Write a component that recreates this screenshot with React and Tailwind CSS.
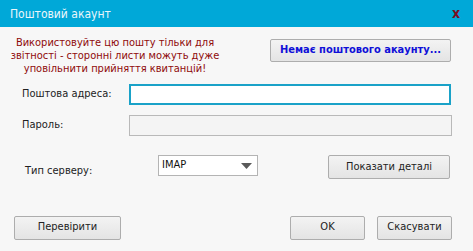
import React from "react";

const font = { fontFamily: '"DejaVu Sans Condensed", "Liberation Sans", Arial, sans-serif' };

function Btn({ className = "", children }) {
  return (
    <div
      className={
        "shrink-0 flex items-center justify-center border border-[#adadad] rounded-[2px] bg-gradient-to-b from-[#f3f3f3] to-[#e4e4e4] text-[11px] text-[#222] whitespace-nowrap " +
        className
      }
    >
      {children}
    </div>
  );
}

export default function App() {
  return (
    <div
      className="w-[473px] h-[251px] bg-[#f7f7f7] flex flex-col overflow-hidden"
      style={font}
    >
      <div className="h-[27px] bg-[#00a8d8] flex items-center justify-between pl-[10px] pr-[13px] shrink-0">
        <span className="text-[12px] text-[#eaf6fb]">Поштовий акаунт</span>
        <span className="text-[14px] font-bold text-[#7a0c1e] leading-none pb-[1px]">x</span>
      </div>

      <div className="flex items-start">
        <div className="shrink-0 w-[220px] ml-[5px] pt-[9px] text-center text-[11px] leading-[13px] text-[#8f0a0a]">
          Використовуйте цю пошту тільки для звітності - сторонні листи можуть дуже уповільнити прийняття квитанцій!
        </div>
        <Btn className="ml-[45px] mt-[12px] w-[181px] h-[23px] font-bold">
          <span className="text-[#1010d8] text-[11px]">Немає поштового акаунту...</span>
        </Btn>
      </div>

      <div className="flex items-center mt-[9px]">
        <span className="shrink-0 w-[129px] pl-[22px] text-[11px] text-[#222] whitespace-nowrap">Поштова адреса:</span>
        <div className="shrink-0 w-[322px] h-[21px] border-2 border-[#1aa2c8] bg-white" />
      </div>

      <div className="flex items-center mt-[10px]">
        <span className="shrink-0 w-[129px] pl-[22px] text-[11px] text-[#222] whitespace-nowrap">Пароль:</span>
        <div className="shrink-0 w-[323px] h-[21px] border border-[#b9b9b9] bg-[#f4f4f4]" />
      </div>

      <div className="flex items-start mt-[19px]">
        <span className="shrink-0 w-[158px] pl-[25px] pt-[8px] text-[11px] text-[#222] whitespace-nowrap">Тип серверу:</span>
        <div className="shrink-0 w-[100px] h-[21px] border border-[#b4b4b4] bg-white flex items-center justify-between pl-[3px] pr-[5px]">
          <span className="text-[11px] text-[#111]">IMAP</span>
          <svg width="11" height="6" viewBox="0 0 11 6">
            <path d="M0 0 L11 0 L5.5 6 Z" fill="#5a5a5a" />
          </svg>
        </div>
        <Btn className="ml-[70px] w-[122px] h-[24px]">Показати деталі</Btn>
      </div>

      <div className="flex items-start mt-[36px]">
        <Btn className="ml-[14px] w-[107px] h-[24px]">Перевірити</Btn>
        <Btn className="ml-[169px] w-[75px] h-[24px]">OK</Btn>
        <Btn className="ml-[12px] w-[75px] h-[24px]">Скасувати</Btn>
      </div>
    </div>
  );
}
